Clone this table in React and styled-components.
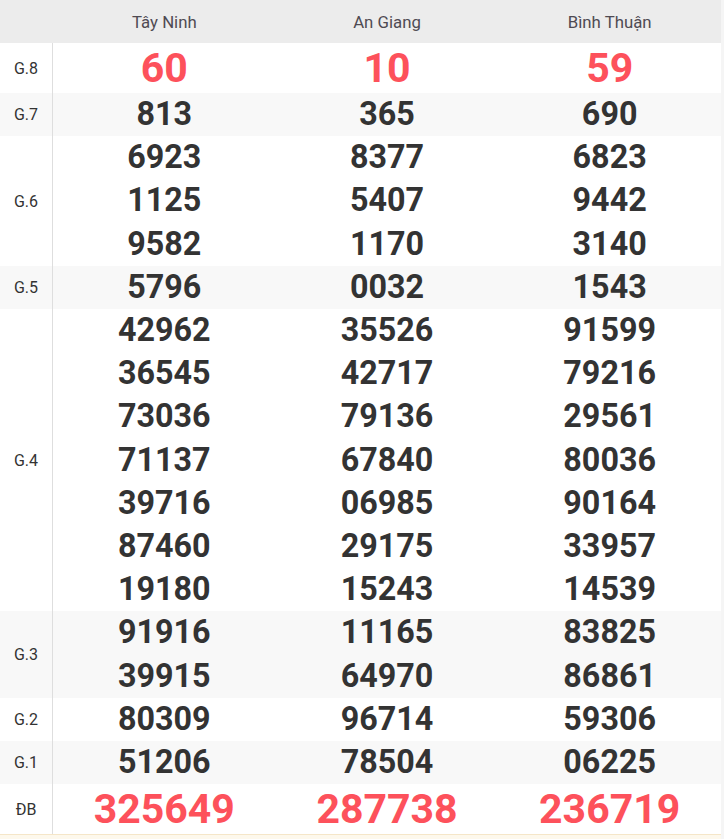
import React from "react";
import styled, { createGlobalStyle } from "styled-components";

const GlobalStyle = createGlobalStyle`
  body {
    margin: 0;
    background: #f5f5f5;
    font-family: Roboto, "Liberation Sans", Arial, sans-serif;
  }
`;

const Table = styled.div`
  width: 721px;
  background: #fff;
`;

const Row = styled.div`
  display: grid;
  grid-template-columns: 53px repeat(3, 1fr);
  background: ${(p) => (p.$shade ? "#f8f8f8" : "#fff")};
`;

const HeaderRow = styled(Row)`
  background: #ececec;
  height: 43px;
`;

const HeaderCell = styled.div`
  display: flex;
  align-items: center;
  justify-content: center;
  font-size: 16.8px;
  color: #4f4a52;
`;

const Label = styled.div`
  display: flex;
  align-items: center;
  justify-content: center;
  border-right: 1px solid #dedede;
  font-size: 16px;
  color: #333;
`;

const Cell = styled.div`
  display: flex;
  flex-direction: column;
  align-items: center;
`;

const Num = styled.div`
  font-weight: 700;
  font-size: ${(p) => (p.$hot ? "41px" : "32.3px")};
  line-height: ${(p) => (p.$hot ? "50px" : "43.2px")};
  color: ${(p) => (p.$hot ? "#fd515b" : "#333")};
`;

const Footer = styled.div`
  width: 721px;
  height: 5px;
  border-top: 1px solid #f5e6c8;
  background: #fdf8ec;
`;

const provinces = ["Tây Ninh", "An Giang", "Bình Thuận"];

const prizes = [
  { name: "G.8", hot: true, values: [["60"], ["10"], ["59"]] },
  { name: "G.7", values: [["813"], ["365"], ["690"]] },
  {
    name: "G.6",
    values: [
      ["6923", "1125", "9582"],
      ["8377", "5407", "1170"],
      ["6823", "9442", "3140"],
    ],
  },
  { name: "G.5", values: [["5796"], ["0032"], ["1543"]] },
  {
    name: "G.4",
    values: [
      ["42962", "36545", "73036", "71137", "39716", "87460", "19180"],
      ["35526", "42717", "79136", "67840", "06985", "29175", "15243"],
      ["91599", "79216", "29561", "80036", "90164", "33957", "14539"],
    ],
  },
  {
    name: "G.3",
    values: [
      ["91916", "39915"],
      ["11165", "64970"],
      ["83825", "86861"],
    ],
  },
  { name: "G.2", values: [["80309"], ["96714"], ["59306"]] },
  { name: "G.1", values: [["51206"], ["78504"], ["06225"]] },
  { name: "ĐB", hot: true, values: [["325649"], ["287738"], ["236719"]] },
];

export default function App() {
  return (
    <>
      <GlobalStyle />
      <Table>
        <HeaderRow>
          <div />
          {provinces.map((p) => (
            <HeaderCell key={p}>{p}</HeaderCell>
          ))}
        </HeaderRow>
        {prizes.map((prize, i) => (
          <Row key={prize.name} $shade={i % 2 === 1}>
            <Label>{prize.name}</Label>
            {prize.values.map((col, j) => (
              <Cell key={j}>
                {col.map((v) => (
                  <Num key={v} $hot={prize.hot}>
                    {v}
                  </Num>
                ))}
              </Cell>
            ))}
          </Row>
        ))}
      </Table>
      <Footer />
    </>
  );
}
